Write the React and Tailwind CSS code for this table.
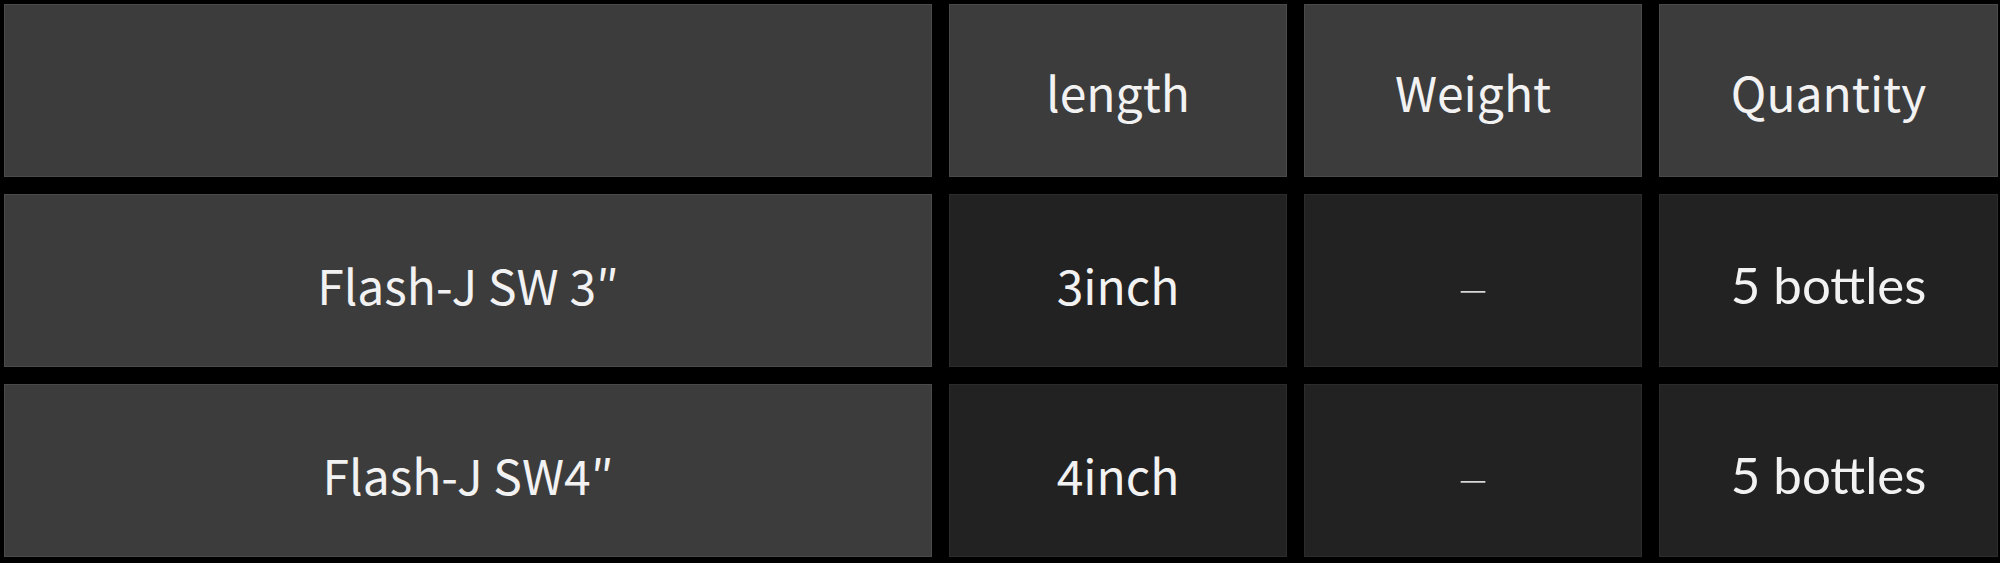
// App.jsx
const rows = [
  { name: "Flash-J SW 3″", length: "3inch", weight: "–", qty: "5 bottles" },
  { name: "Flash-J SW4″", length: "4inch", weight: "–", qty: "5 bottles" },
];

const sans = "font-['Noto_Sans_CJK_KR','Noto_Sans',sans-serif]";

export default function App() {
  return (
    <div className="w-[2000px] h-[563px] bg-black pl-[4px] pt-[4px]">
      <div className="grid grid-cols-[928px_338px_338px_339px] grid-rows-[173px_173px_173px] gap-x-[17px] gap-y-[17px] text-[48px] leading-none text-[#f2f2f2]">
        <div className="bg-[#3c3c3c] border border-[#4a4a4a]" />
        <div className={`bg-[#3c3c3c] border border-[#4a4a4a] flex items-center justify-center ${sans}`}>length</div>
        <div className={`bg-[#3c3c3c] border border-[#4a4a4a] flex items-center justify-center ${sans}`}>Weight</div>
        <div className={`bg-[#3c3c3c] border border-[#4a4a4a] flex items-center justify-center ${sans}`}>Quantity</div>

        {rows.map((r) => (
          <>
            <div key={r.name + "n"} className={`bg-[#3c3c3c] border border-[#4a4a4a] flex items-center justify-center pt-[7px] ${sans}`}>
              {r.name}
            </div>
            <div key={r.name + "l"} className={`bg-[#222222] border border-[#2c2c2c] flex items-center justify-center pt-[7px] ${sans}`}>
              {r.length}
            </div>
            <div key={r.name + "w"} className={`bg-[#222222] border border-[#2c2c2c] flex items-center justify-center pt-[4px] text-[56px] font-thin text-[#d8d8d8] ${sans}`}>
              {r.weight}
            </div>
            <div key={r.name + "q"} className="bg-[#222222] border border-[#2c2c2c] flex items-center justify-center pt-[8px] text-[51px] font-['Lato',sans-serif]">
              {r.qty}
            </div>
          </>
        ))}
      </div>
    </div>
  );
}
